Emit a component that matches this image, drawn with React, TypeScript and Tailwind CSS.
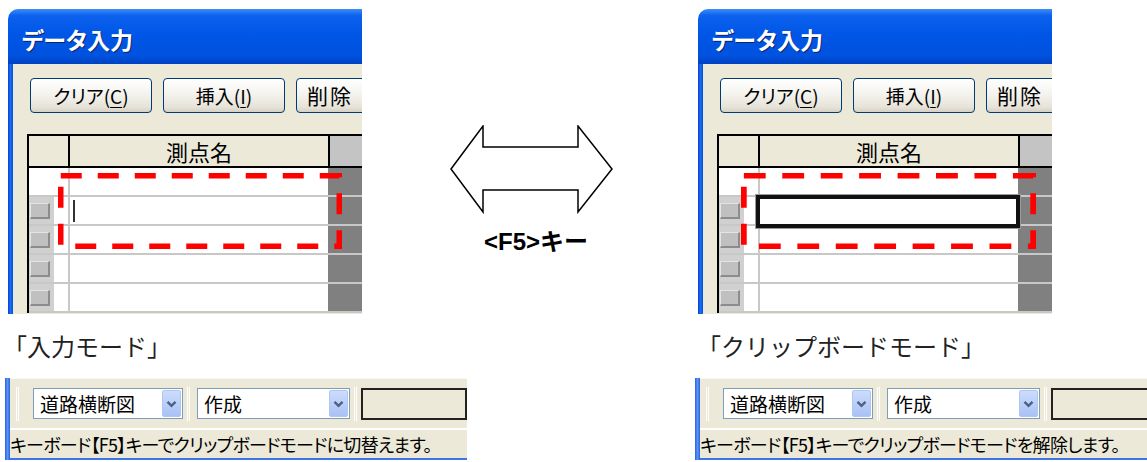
import React from "react";

const jp = "font-['Noto_Sans_CJK_JP',sans-serif] [font-feature-settings:'palt']";

function XpButton({ label, accel }: { label: string; accel: string }) {
  return (
    <div className="w-[122px] h-[35px] shrink-0 rounded-[4px] border border-[#003C74] bg-[linear-gradient(to_bottom,#ffffff_0%,#f4f3ee_45%,#e6e3d8_85%,#d6d0c5_100%)] flex items-center justify-center text-[19px] leading-none text-black">
      <span className={jp}>
        {label}(<span className="underline underline-offset-[3px]">{accel}</span>)
      </span>
    </div>
  );
}

function RowHead({ button }: { button: boolean }) {
  return (
    <div className="w-[39px] h-full shrink-0 bg-white">
      {button && (
        <div className="w-[25px] h-full bg-[#d0d0d0] flex items-center pl-[1px]">
          <div className="w-[20px] h-[16px] bg-[#c0c0c0] border-t border-l border-[#e4e4e4] border-b-2 border-r-2 border-b-[#8c8c8c] border-r-[#8c8c8c]" />
        </div>
      )}
    </div>
  );
}

function GridRow({ index, cursor }: { index: number; cursor: boolean }) {
  return (
    <div className="flex h-[29px] border-b-2 border-[#c8c8c8]">
      <RowHead button={index > 0} />
      <div className="w-[2px] shrink-0 bg-[#c8c8c8]" />
      <div className="w-[258px] shrink-0 bg-white relative">
        {cursor && <div className="ml-[3px] mt-[3px] w-[2px] h-[22px] bg-[#333]" />}
      </div>
      <div className="flex-1 bg-[#808080]" />
    </div>
  );
}

function DashedBox({ pos }: { pos: string }) {
  return (
    <svg className={`absolute overflow-visible ${pos}`} viewBox="0 0 284 76" preserveAspectRatio="none">
      <rect x="2.75" y="2.75" width="278.5" height="70.5" fill="none" stroke="#ff0000" strokeWidth="5.5" strokeDasharray="21 16" />
    </svg>
  );
}

function DataWindow({ mode }: { mode: "input" | "clip" }) {
  return (
    <div className="relative w-[354px] h-[305px] shrink-0 overflow-hidden">
      <div className="h-[55px] rounded-tl-[10px] bg-[linear-gradient(to_bottom,#3d8ef8_0%,#0c61ee_12%,#0056e6_45%,#0052df_85%,#0041c2_100%)] flex items-center pl-[14px] pt-[6px]">
        <span className={`${jp} text-white font-bold text-[23px] leading-none [text-shadow:1px_1px_0_#0a246a]`}>データ入力</span>
      </div>
      <div className="flex h-[250px]">
        <div className="w-[5px] shrink-0 bg-[linear-gradient(to_right,#0a3fd6,#1a6cf0,#0052e0)]" />
        <div className="flex-1 bg-[#ECE9D8] pt-[14px]">
          <div className="flex gap-[11px] pl-[17px]">
            <XpButton label="クリア" accel="C" />
            <XpButton label="挿入" accel="I" />
            <div className="w-[122px] h-[35px] shrink-0 rounded-[4px] border border-[#003C74] bg-[linear-gradient(to_bottom,#ffffff_0%,#f4f3ee_45%,#e6e3d8_85%,#d6d0c5_100%)] flex items-center pl-[10px] text-[21px] leading-none">
              <span className={`${jp} tracking-[2px]`}>削除</span>
            </div>
          </div>
          <div className="mt-[21px] ml-[14px] border-t-2 border-l-2 border-black">
            <div className="flex h-[32px] border-b-2 border-black bg-[#ECE9D8]">
              <div className="w-[39px] shrink-0" />
              <div className="w-[2px] shrink-0 bg-black" />
              <div className={`w-[258px] shrink-0 flex items-center justify-center text-[22px] leading-none text-black ${jp}`}>測点名</div>
              <div className="w-[2px] shrink-0 bg-black" />
              <div className="flex-1 bg-[#c4c4c4]" />
            </div>
            {[0, 1, 2, 3, 4].map((i) => (
              <GridRow key={i} index={i} cursor={mode === "input" && i === 1} />
            ))}
          </div>
        </div>
      </div>
      {mode === "clip" && (
        <div className="absolute left-[58px] top-[186px] w-[264px] h-[33px] border-[4px] border-[#111] shadow-[0_0_0_1px_#9a9a9a]" />
      )}
      <DashedBox pos={mode === "input" ? "left-[50px] top-[164px] w-[284px] h-[76px]" : "left-[43px] top-[164px] w-[295px] h-[76px]"} />
    </div>
  );
}

function Combo({ text, width }: { text: string; width: string }) {
  return (
    <div className={`${width} h-[31px] shrink-0 border border-[#7F9DB9] bg-white flex items-center`}>
      <span className={`flex-1 pl-[6px] text-[19px] leading-none text-black ${jp}`}>{text}</span>
      <div className="w-[19px] h-[27px] mr-[1px] rounded-[2px] border border-[#b0c6f2] bg-[linear-gradient(to_bottom,#cddcfc,#a9c2f5)] flex items-center justify-center">
        <svg width="11" height="8" viewBox="0 0 11 8">
          <path d="M1.5 1.8 L5.5 5.8 L9.5 1.8" fill="none" stroke="#4d6185" strokeWidth="2.4" />
        </svg>
      </div>
    </div>
  );
}

function Etched() {
  return <div className="w-[3px] h-[34px] shrink-0 border-l border-white border-r border-[#aca899] bg-[#ECE9D8]" />;
}

function Toolbar({ status }: { status: string }) {
  return (
    <div className="w-[462px] h-[82px] flex shrink-0">
      <div className="w-[5px] shrink-0 bg-[linear-gradient(to_right,#2a5fe0,#5a95f5,#2a5fe0)]" />
      <div className="flex-1 flex flex-col bg-[#ECE9D8]">
        <div className="h-[50px] flex items-center border-t border-[#f8f7f2]">
          <div className="ml-[6px]">
            <Etched />
          </div>
          <div className="ml-[14px]">
            <Combo text="道路横断図" width="w-[150px]" />
          </div>
          <div className="ml-[4px]">
            <Etched />
          </div>
          <div className="ml-[7px]">
            <Combo text="作成" width="w-[153px]" />
          </div>
          <div className="ml-[4px]">
            <Etched />
          </div>
          <div className="ml-[4px] flex-1 h-[32px] border-2 border-[#222] bg-[#ECE9D8]" />
        </div>
        <div className="h-[2px] border-t border-[#aca899] border-b border-white" />
        <div className={`h-[28px] flex items-center text-[18px] leading-none tracking-[-0.7px] text-black whitespace-nowrap ${jp}`}>{status}</div>
        <div className="h-[2px] bg-[#3f74e8]" />
      </div>
    </div>
  );
}

export default function App() {
  return (
    <div className="w-[1147px] h-[462px] bg-white flex overflow-hidden">
      <div className="w-[690px] shrink-0 flex flex-col">
        <div className="flex pt-[9px]">
          <div className="ml-[8px]">
            <DataWindow mode="input" />
          </div>
          <div className="ml-[88px] flex flex-col">
            <svg className="mt-[116px]" width="164" height="89" viewBox="0 0 164 89">
              <path
                d="M1 44 L33 1 L33 22 L128 22 L128 1 L162 44 L128 87 L128 65 L33 65 L33 87 Z"
                fill="#fff"
                stroke="#000"
                strokeWidth="1.5"
                strokeLinejoin="miter"
              />
            </svg>
            <div className="mt-[15px] ml-[34px] text-[24px] leading-[26px] font-bold text-black font-['Liberation_Sans','Noto_Sans_CJK_JP',sans-serif]">
              {"<F5>キー"}
            </div>
          </div>
        </div>
        <div className="mt-[20px] pl-[3px] text-[24px] leading-[24px] text-[#222] font-['Noto_Sans_CJK_JP',sans-serif]">「入力モード」</div>
        <div className="mt-[20px] ml-[5px]">
          <Toolbar status="キーボード【F5】キーでクリップボードモードに切替えます。" />
        </div>
      </div>
      <div className="flex-1 flex flex-col overflow-hidden">
        <div className="flex pt-[9px]">
          <div className="ml-[8px]">
            <DataWindow mode="clip" />
          </div>
        </div>
        <div className="mt-[20px] pl-[7px] text-[24px] leading-[24px] text-[#222] font-['Noto_Sans_CJK_JP',sans-serif]">「クリップボードモード」</div>
        <div className="mt-[20px] ml-[5px]">
          <Toolbar status="キーボード【F5】キーでクリップボードモードを解除します。" />
        </div>
      </div>
    </div>
  );
}
